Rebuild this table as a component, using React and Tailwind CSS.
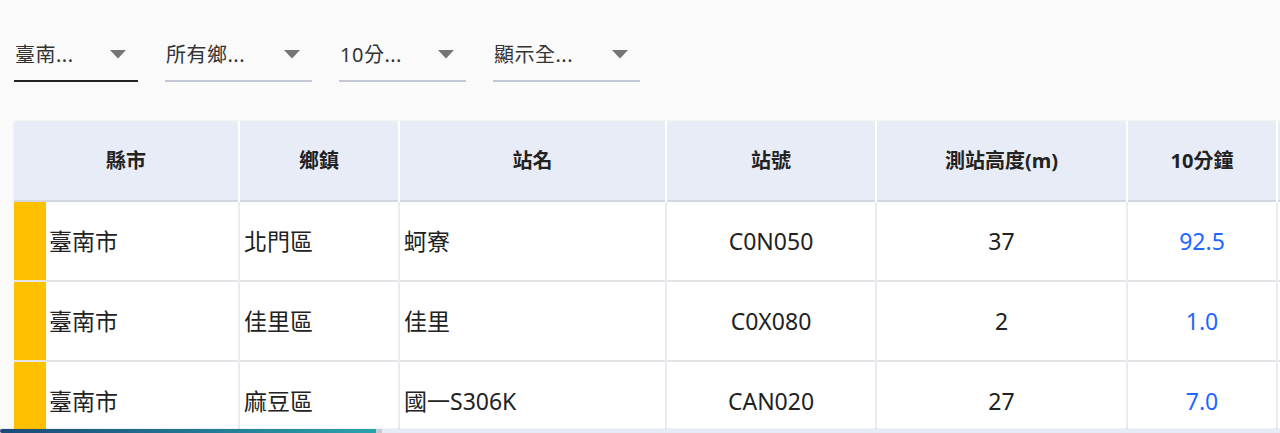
import React from 'react';

const filters = [
  { label: '臺南...', width: 'w-[124px]', active: true },
  { label: '所有鄉...', width: 'w-[147px]' },
  { label: '10分...', width: 'w-[127px]' },
  { label: '顯示全...', width: 'w-[147px]' },
];

const columns = [
  { title: '縣市', width: 225 },
  { title: '鄉鎮', width: 160 },
  { title: '站名', width: 267 },
  { title: '站號', width: 210 },
  { title: '測站高度(m)', width: 251 },
  { title: '10分鐘', width: 150 },
  { title: '1小時', width: 150 },
];

const rows = [
  { county: '臺南市', town: '北門區', name: '蚵寮', id: 'C0N050', height: '37', tenMin: '92.5', hour: '120.0' },
  { county: '臺南市', town: '佳里區', name: '佳里', id: 'C0X080', height: '2', tenMin: '1.0', hour: '3.5' },
  { county: '臺南市', town: '麻豆區', name: '國一S306K', id: 'CAN020', height: '27', tenMin: '7.0', hour: '12.0' },
];

const FilterSelect = ({ label, width, active }) => (
  <div
    className={`${width} h-[52px] flex items-center justify-between pl-px pr-3 ${
      active ? 'border-b-2 border-[#222]' : 'border-b-2 border-[#c4c8d4]'
    }`}
  >
    <span className="text-[20px] tracking-[0.5px] text-[#333]">{label}</span>
    <svg width="16" height="9" viewBox="0 0 16 9" className="mb-px">
      <path d="M0 0 L16 0 L8 8.5 Z" fill="#757575" />
    </svg>
  </div>
);

const App = () => {
  return (
    <div
      className="relative h-[433px] w-[1280px] overflow-hidden bg-[#fafafa]"
      style={{ fontFamily: '"Noto Sans", "Noto Sans CJK TC", sans-serif' }}
    >
      {/* Filters */}
      <div className="flex gap-[27px] pl-[14px] pt-[30px]">
        {filters.map((f) => (
          <FilterSelect key={f.label} {...f} />
        ))}
      </div>

      {/* Table */}
      <div className="ml-[14px] mt-[39px] w-max shadow-[0_0_2px_rgba(0,0,0,0.08)]">
        <table className="table-fixed border-collapse">
          <colgroup>
            {columns.map((c) => (
              <col key={c.title} style={{ width: c.width }} />
            ))}
          </colgroup>
          <thead>
            <tr className="h-[80px] bg-[#e8ecf7] border-b-2 border-[#d2d6e0]">
              {columns.map((c) => (
                <th
                  key={c.title}
                  className="border-r-2 border-white text-center text-[20px] font-bold text-[#222]"
                >
                  {c.title}
                </th>
              ))}
            </tr>
          </thead>
          <tbody>
            {rows.map((r) => (
              <tr key={r.id} className="h-[80px] bg-white border-b-2 border-[#e2e4e8]">
                <td className="border-r-2 border-[#e8ebf0] p-0 h-[78px]">
                  <div className="flex h-full items-center">
                    <div className="h-full w-[32px] bg-[#fec001]" />
                    <span className="pl-[3px] text-[23px] text-[#222]">{r.county}</span>
                  </div>
                </td>
                <td className="border-r-2 border-[#e8ebf0] pl-[4px] text-[23px] text-[#222]">{r.town}</td>
                <td className="border-r-2 border-[#e8ebf0] pl-[4px] text-[23px] text-[#222]">{r.name}</td>
                <td className="border-r-2 border-[#e8ebf0] text-center text-[23px] text-[#222]">{r.id}</td>
                <td className="border-r-2 border-[#e8ebf0] text-center text-[23px] text-[#222]">{r.height}</td>
                <td className="border-r-2 border-[#e8ebf0] text-center text-[23px] text-[#2266ff]">{r.tenMin}</td>
                <td className="border-r-2 border-[#e8ebf0] text-center text-[23px] text-[#2266ff]">{r.hour}</td>
              </tr>
            ))}
          </tbody>
        </table>
      </div>

      {/* Horizontal scrollbar */}
      <div className="absolute bottom-0 left-0 flex h-[4px] w-full bg-[#e6eaf4] shadow-[0_-1px_1px_rgba(0,0,0,0.06)]">
        <div className="h-full w-[376px] rounded-l-full bg-gradient-to-r from-[#1b4a78] to-[#2aa3aa]" />
        <div className="h-full w-[6px] bg-[#c8cad2]" />
      </div>
    </div>
  );
};

export default App;
